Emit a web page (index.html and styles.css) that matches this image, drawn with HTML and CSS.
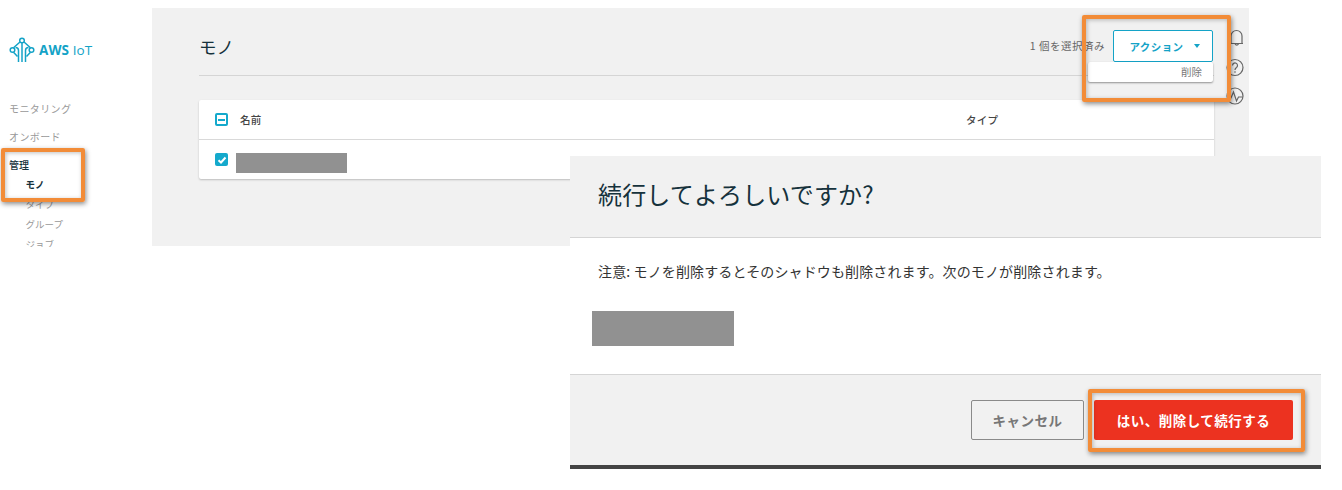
FILE: index.html
```html
<!DOCTYPE html>
<html lang="ja">
<head>
<meta charset="utf-8">
<title>AWS IoT</title>
<link rel="stylesheet" href="styles.css">
</head>
<body>
<div class="canvas">
  <aside class="sidebar">
    <div class="brand">
      <svg class="brand-logo" viewBox="0 0 26 26" width="26" height="26" fill="none" stroke="#14a3c7" stroke-width="1.5">
        <circle cx="13" cy="3.500" r="2.300"/>
        <circle cx="3.500" cy="13" r="2.300"/>
        <circle cx="22.500" cy="13" r="2.300"/>
        <path d="M11 5 4.500 10.800M15 5 21.500 10.800M4.500 15.200 8.500 19.500M21.500 15.200 17.500 19.500"/>
        <path d="M9.500 25V13.500C9.500 11.500 8 10.500 6.500 10.500M13 25V6M16.500 25V13.500C16.500 11.500 18 10.500 19.500 10.500"/>
      </svg>
      <span class="brand-name"><b class="brand-aws">AWS</b> IoT</span>
    </div>
    <nav class="nav">
      <div class="nav-item">モニタリング</div>
      <div class="nav-item">オンボード</div>
      <div class="nav-group">
        <div class="nav-head">管理</div>
        <div class="nav-sub nav-sub-active">モノ</div>
        <div class="nav-sub">タイプ</div>
        <div class="nav-sub">グループ</div>
        <div class="nav-sub">ジョブ</div>
      </div>
    </nav>
  </aside>

  <main class="console">
    <header class="console-head">
      <h1 class="console-title">モノ</h1>
      <div class="console-actions">
        <span class="selected-count">1 個を選択済み</span>
        <div class="action-wrap">
          <button class="action-btn">アクション<span class="caret"></span></button>
          <div class="action-menu">削除</div>
        </div>
      </div>
    </header>
    <section class="table">
      <div class="table-row table-header">
        <span class="check check-minus"></span>
        <span class="col-name">名前</span>
        <span class="col-type">タイプ</span>
      </div>
      <div class="table-row table-body">
        <span class="check check-on">
          <svg viewBox="0 0 12 12" width="12" height="12" fill="none" stroke="#fff" stroke-width="2"><path d="M2.500 6.200 5 8.500 9.500 3.500"/></svg>
        </span>
        <span class="redact redact-row"></span>
      </div>
    </section>
  </main>

  <div class="side-icons">
    <svg viewBox="0 0 20 20" width="20" height="20" fill="none" stroke="#666" stroke-width="1.2"><path d="M2.500 15.500h15.500M6 15V8a5.500 5.500 0 0 1 11 0v7M10 16a2 2 0 0 0 3.500 0"/></svg>
    <svg viewBox="0 0 20 20" width="20" height="20" fill="none" stroke="#666" stroke-width="1.2"><circle cx="10" cy="10.500" r="8"/><path d="M7.500 8.500a2.500 2.500 0 1 1 4 2c-1 .7-1.500 1.200-1.500 2.500M10 14.200v1.500"/></svg>
    <svg viewBox="0 0 20 20" width="20" height="20" fill="none" stroke="#666" stroke-width="1.2"><circle cx="10" cy="10" r="8"/><path d="M2.500 12H6l2.500-6 3 9 2-4h4"/></svg>
  </div>

  <section class="dialog">
    <div class="dialog-head"><h2 class="dialog-title">続行してよろしいですか?</h2></div>
    <div class="dialog-body">
      <p class="dialog-text">注意: モノを削除するとそのシャドウも削除されます。次のモノが削除されます。</p>
      <span class="redact redact-dialog"></span>
    </div>
    <div class="dialog-foot">
      <button class="btn btn-cancel">キャンセル</button>
      <button class="btn btn-danger">はい、削除して続行する</button>
    </div>
  </section>

  <div class="mark mark-nav"></div>
  <div class="mark mark-action"></div>
  <div class="mark mark-confirm"></div>
</div>
</body>
</html>
```
FILE: styles.css
```css
* { box-sizing: border-box; }
html, body { margin: 0; padding: 0; background: #fff; }
body { font-family: "Noto Sans CJK JP", "Noto Sans", sans-serif; overflow: hidden; }
.canvas { position: relative; width: 1342px; height: 490px; overflow: hidden; }

.sidebar { position: absolute; left: 0; top: 0; width: 152px; height: 247px; overflow: hidden; padding: 37px 0 0 9px; }
.brand { display: flex; align-items: center; gap: 4px; height: 26px; }
.brand-name { font-family: "Open Sans", sans-serif; font-size: 13.500px; font-weight: 400; color: #14a3c7; letter-spacing: .1px; }
.brand-aws { font-weight: 700; }
.nav { margin-top: 39px; font-size: 10px; line-height: 14px; color: #999; }
.nav-item { margin-bottom: 14px; letter-spacing: .4px; }
.nav-group { margin-top: -0.5px; }
.nav-head { color: #16323c; font-weight: 500; }
.nav-sub { padding-left: 16.500px; margin-top: 6px; font-size: 9.500px; }
.nav-sub-active { color: #16323c; font-weight: 700; margin-top: 5px; }

.console { position: absolute; left: 152px; top: 8px; width: 1097px; height: 238px; background: #f1f1f1; padding: 0 35px 0 47px; }
.console-head { display: flex; justify-content: space-between; align-items: flex-start; height: 68px; border-bottom: 1px solid #d5d5d5; }
.console-title { margin: 27px 0 0; font-size: 17.500px; font-weight: 400; color: #16323c; line-height: 24px; }
.console-actions { display: flex; align-items: flex-start; gap: 8px; margin: 22px 1px 0 0; }
.selected-count { font-size: 10.500px; color: #666; line-height: 32px; letter-spacing: .5px; }
.action-wrap { position: relative; width: 100px; }
.action-btn { display: flex; align-items: center; justify-content: center; width: 100px; height: 32px; background: #fff; border: 1px solid #14a3c7; border-radius: 2px; color: #14a3c7; font: 700 10.500px "Noto Sans CJK JP", sans-serif; letter-spacing: .4px; padding: 0 0 0 4px; }
.caret { margin-left: 11px; width: 0; height: 0; border: 3.500px solid transparent; border-top: 4px solid #14a3c7; border-bottom: 0; }
.action-menu { position: absolute; left: -25px; top: 32px; width: 125px; height: 20px; background: #fff; border-radius: 2px; box-shadow: 0 1px 2px rgba(0,0,0,.4); font-size: 10.500px; line-height: 19px; color: #777; text-align: right; padding-right: 11px; }

.table { margin-top: 24px; background: #fff; border-radius: 2px; box-shadow: 0 1px 2px rgba(0,0,0,.22); }
.table-row { display: flex; align-items: center; padding-left: 16px; }
.table-header { height: 40px; border-bottom: 1px solid #d9d9d9; font-size: 10.500px; font-weight: 500; color: #444; }
.table-body { height: 39px; }
.col-name { margin-left: 12px; letter-spacing: .3px; }
.col-type { position: absolute; left: 814px; letter-spacing: .3px; }
.check { display: flex; align-items: center; justify-content: center; width: 13px; height: 13px; border-radius: 2px; }
.check-minus { border: 2px solid #14a9cc; position: relative; }
.check-minus::after { content: ""; width: 7px; height: 2px; background: #14a9cc; }
.check-on { background: #14a9cc; }
.redact { display: block; background: #919191; }
.redact-row { width: 111px; height: 20px; margin: 6px 0 0 8px; }

.side-icons { position: absolute; left: 1225px; top: 28px; display: flex; flex-direction: column; gap: 9px; }

.dialog { position: absolute; left: 570px; top: 156px; width: 751px; height: 313px; display: flex; flex-direction: column; background: #fff; border-bottom: 4px solid #444; }
.dialog-head { height: 82px; background: #f1f1f1; border-bottom: 1px solid #d5d5d5; padding: 21px 0 0 28px; }
.dialog-title { margin: 0; font-size: 24px; letter-spacing: .15px; font-weight: 400; line-height: 34px; color: #16323c; }
.dialog-body { height: 137px; border-bottom: 1px solid #d5d5d5; padding: 23px 0 0 28px; }
.dialog-text { margin: 0; font-size: 14px; letter-spacing: .13px; line-height: 20px; color: #333; }
.redact-dialog { width: 142px; height: 35px; margin: 30px 0 0 -6px; }
.dialog-foot { flex: 1; background: #f1f1f1; display: flex; justify-content: flex-end; align-items: center; gap: 10px; padding: 0 28px 0 0; }
.btn { height: 40px; border-radius: 2px; font: 700 13.500px "Noto Sans CJK JP", sans-serif; letter-spacing: .5px; padding: 0; }
.btn-cancel { width: 113px; background: #f1f1f1; border: 1px solid #8a8a8a; color: #777; }
.btn-danger { width: 199px; background: #ec3220; border: 0; color: #fff; }

.mark { position: absolute; border: 4px solid #f28c38; border-radius: 2px; box-shadow: 1px 2px 5px rgba(0,0,0,.45), inset 1px 1px 4px rgba(0,0,0,.25); }
.mark-nav { left: 1px; top: 148px; width: 84px; height: 54px; }
.mark-action { left: 1082px; top: 15px; width: 149px; height: 87px; }
.mark-confirm { left: 1088px; top: 389px; width: 217px; height: 63px; }
```
